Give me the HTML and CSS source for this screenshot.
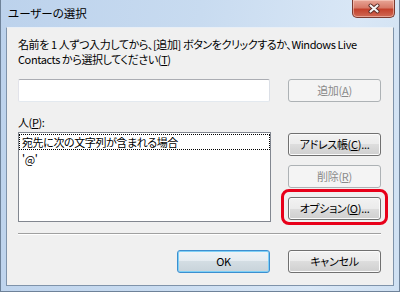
FILE: index.html
```html
<!DOCTYPE html>
<html lang="ja">
<head>
<meta charset="utf-8">
<link rel="stylesheet" href="styles.css">
</head>
<body>
<div class="window">
  <div class="titlebar">
    <span class="title">ユーザーの選択</span>
    <div class="close">
      <svg width="14" height="11" viewBox="0 0 14 11">
        <path d="M3.5 2.5 L10.5 8.5 M10.5 2.5 L3.5 8.5" stroke="#5a2a24" stroke-width="4" stroke-linecap="round"/>
        <path d="M3.5 2.5 L10.5 8.5 M10.5 2.5 L3.5 8.5" stroke="#f4f4f4" stroke-width="2.2" stroke-linecap="round"/>
      </svg>
    </div>
  </div>
  <div class="client">
    <p class="intro">名前を 1 人ずつ入力してから、[追加] ボタンをクリックするか、Windows Live<br>Contacts から選択してください(<u>T</u>)</p>
    <div class="row row-input">
      <div class="textbox"></div>
      <button class="btn btn-add disabled">追加(<u>A</u>)</button>
    </div>
    <div class="label">人(<u>P</u>):</div>
    <div class="row row-list">
      <div class="listbox">
        <div class="item focused">宛先に次の文字列が含まれる場合</div>
        <div class="item">'@'</div>
      </div>
      <div class="side">
        <button class="btn">アドレス帳(<u>C</u>)...</button>
        <button class="btn disabled">削除(<u>R</u>)</button>
        <div class="highlight-wrap">
          <button class="btn">オプション(<u>O</u>)...</button>
        </div>
      </div>
    </div>
    <div class="separator"></div>
    <div class="footer">
      <button class="btn default">OK</button>
      <button class="btn">キャンセル</button>
    </div>
  </div>
</div>
</body>
</html>
```
FILE: styles.css
```css
html, body {
  margin: 0;
  padding: 0;
}
body {
  width: 400px;
  height: 292px;
  overflow: hidden;
  font-family: "Noto Sans CJK JP", "Noto Sans", sans-serif;
  font-size: 11px;
  letter-spacing: -0.4px;
  font-feature-settings: "palt";
  color: #000;
  background: #fff;
}
.window {
  width: 400px;
  height: 292px;
  box-sizing: border-box;
  border: 1px solid #6e8299;
  border-top: none;
  background: linear-gradient(100deg, #bcd2ec 0%, #c8dbf0 45%, #d9e7f6 80%, #cfe0f2 100%);
  display: flex;
  flex-direction: column;
}
.titlebar {
  height: 27px;
  display: flex;
  justify-content: space-between;
  align-items: flex-start;
  flex-shrink: 0;
}
.title {
  margin-left: 7px;
  margin-top: 5px;
  line-height: 16px;
  font-size: 11.5px;
  letter-spacing: 0;
  color: #000;
}
.close {
  width: 43px;
  height: 18px;
  box-sizing: border-box;
  margin-right: 4px;
  border: 1px solid #7a3a30;
  border-top: none;
  border-radius: 0 0 5px 5px;
  background: linear-gradient(#e8a596 0%, #d77a68 45%, #c4412c 55%, #cf6a55 100%);
  box-shadow: inset 0 0 0 1px rgba(255, 220, 210, 0.5);
  display: flex;
  align-items: center;
  justify-content: center;
}
.client {
  flex: 1;
  margin: 0 5px 5px 5px;
  border: 1px solid #7f93aa;
  border-top-color: #e9eff6;
  background: #f0f0f0;
  padding: 9px 12px 0 11px;
}
.intro {
  margin: 0;
  line-height: 15px;
  white-space: nowrap;
}
.row {
  display: grid;
  grid-template-columns: 252px 93px;
  column-gap: 18px;
}
.row-input {
  margin-top: 12px;
  height: 23px;
}
.textbox {
  box-sizing: border-box;
  height: 23px;
  background: #fff;
  border: 1px solid;
  border-color: #abadb3 #dbdfe6 #e3e9ef #e2e3ea;
  border-radius: 2px;
}
.btn-add {
  margin-top: 1px;
  height: 22px;
}
.label {
  margin-top: 13px;
  line-height: 15px;
}
.row-list {
  margin-top: 2px;
  height: 90px;
}
.listbox {
  width: 253px;
  height: 90px;
  box-sizing: border-box;
  border: 1px solid #828790;
  background: #fff;
  padding: 1px 0 0 0;
}
.item {
  height: 14px;
  line-height: 14px;
  padding-left: 2px;
  box-sizing: content-box;
  border: 1px solid transparent;
  white-space: nowrap;
}
.item.focused {
  border: 1px dotted #000;
}
.item + .item {
  margin-top: 1px;
}
.side {
  display: flex;
  flex-direction: column;
  gap: 9px;
  padding-top: 1px;
}
.btn {
  display: flex;
  align-items: center;
  justify-content: center;
  box-sizing: border-box;
  width: 93px;
  height: 23px;
  padding: 0 0 1px 0;
  margin: 0;
  font-family: inherit;
  font-size: 11px;
  letter-spacing: -0.3px;
  font-feature-settings: "palt";
  color: #000;
  border: 1px solid #707070;
  border-radius: 3px;
  background: linear-gradient(#f2f2f2 0%, #ebebeb 50%, #dddddd 50%, #cfcfcf 100%);
  box-shadow: inset 0 0 0 1px #fbfbfb;
}
.btn.disabled {
  color: #8a8a8a;
  border-color: #adb2b5;
  background: #f4f4f4;
  box-shadow: none;
}
.btn.default {
  border-color: #3c8fd0;
  box-shadow: inset 0 0 0 1px #7fd0f6;
  background: linear-gradient(#eef3f6 0%, #e4ebf0 50%, #d3dde3 50%, #c8d3da 100%);
}
.highlight-wrap {
  position: relative;
}
.highlight-wrap::after {
  content: "";
  position: absolute;
  left: -7px;
  right: -7px;
  top: -8px;
  bottom: -5px;
  border: 3px solid #e8001a;
  border-radius: 8px;
  pointer-events: none;
}
.separator {
  margin-top: 11px;
  height: 0;
  border-top: 1px solid #a0a0a0;
  border-bottom: 1px solid #ffffff;
}
.footer {
  margin-top: 15px;
  display: flex;
  justify-content: flex-end;
  gap: 18px;
}
u {
  text-decoration: underline;
  text-underline-offset: 1px;
}
```
